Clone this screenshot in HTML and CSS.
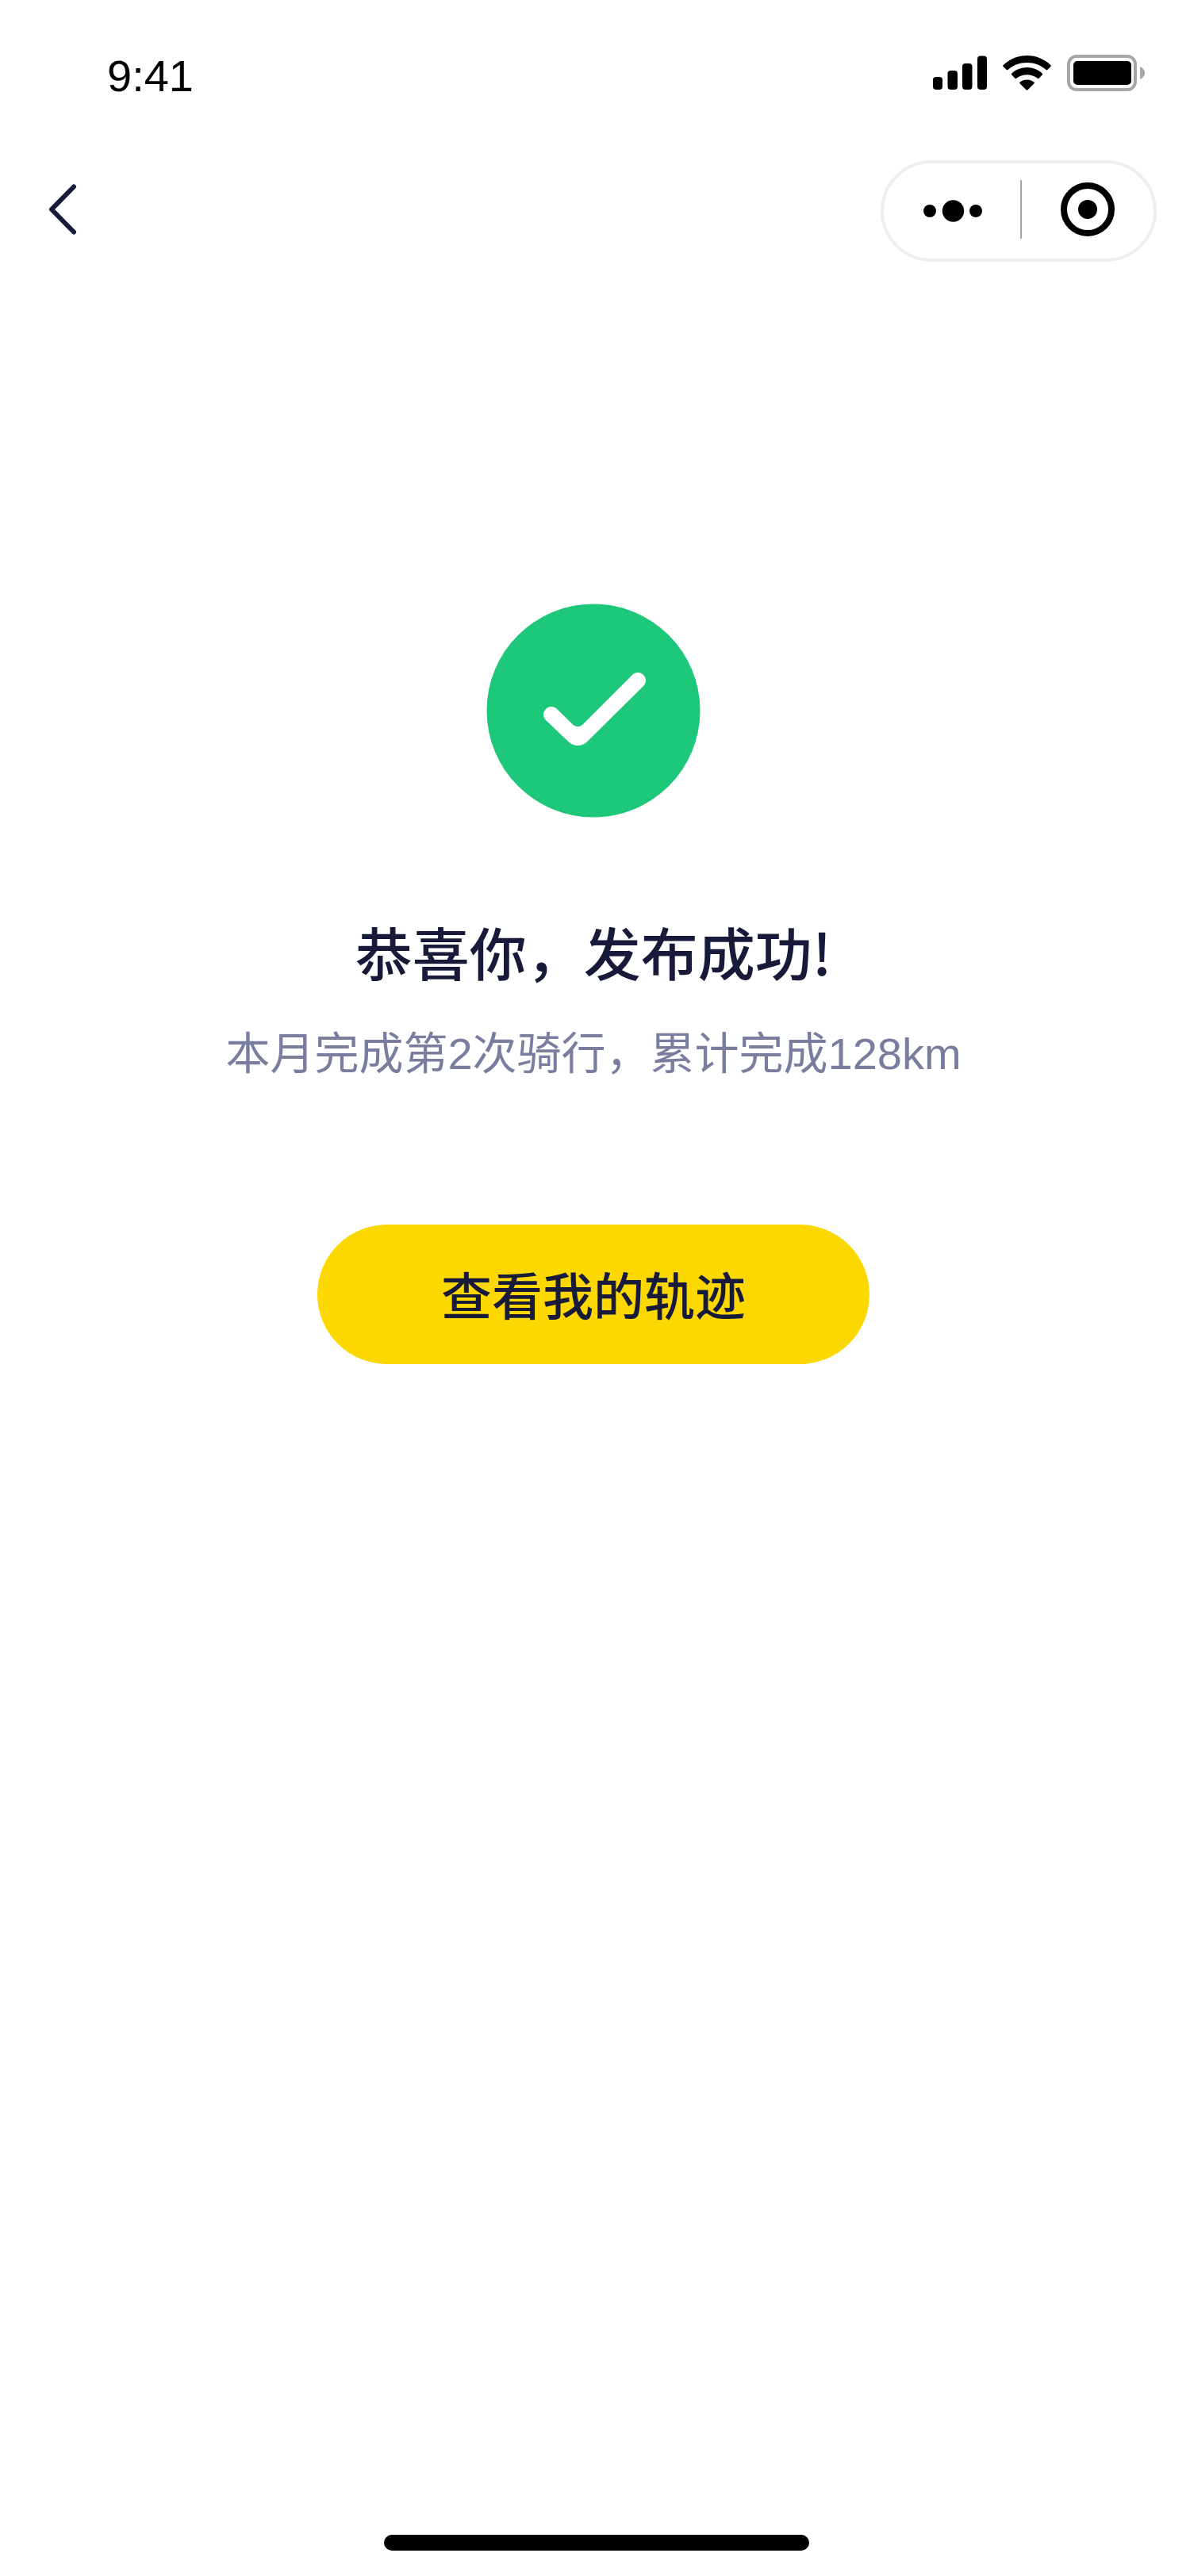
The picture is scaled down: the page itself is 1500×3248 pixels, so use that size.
FILE: index.html
```html
<!DOCTYPE html>
<html lang="zh-CN">
<head>
<meta charset="utf-8">
<meta name="viewport" content="width=device-width, initial-scale=1">
<title>发布成功</title>
<link rel="stylesheet" href="styles.css">
</head>
<body>
<div class="page">
  <header>
    <div class="status-bar">
      <time class="clock">9:41</time>
      <div class="status-icons">
        <svg width="68" height="44" viewBox="0 0 68 44" role="img" aria-label="信号">
          <rect x="0" y="27" width="12" height="16" rx="4"/>
          <rect x="18.500" y="19" width="12.500" height="24" rx="4"/>
          <rect x="37" y="10" width="12.500" height="33" rx="4"/>
          <rect x="56" y="0.500" width="12" height="42.500" rx="4"/>
        </svg>
        <svg width="61" height="44" viewBox="0 0 61 44" role="img" aria-label="无线网络">
          <path d="M30.500 0C42 0 52.500 4.500 60.300 12Q61.300 13 60.300 14L56.300 18Q55.500 18.800 54.600 18C48 12.200 39.500 9 30.500 9S13 12.200 6.400 18Q5.500 18.800 4.700 18L.7 14Q-.3 13 .7 12C8.500 4.500 19 0 30.500 0Z"/>
          <path d="M30.500 15C38 15 44.500 17.800 49.700 22.500Q50.700 23.500 49.700 24.500L45.500 28.800Q44.700 29.600 43.800 28.800C40 25.800 35.500 24.200 30.500 24.200S21 25.800 17.200 28.800Q16.300 29.600 15.500 28.800L11.300 24.500Q10.300 23.500 11.300 22.500C16.500 17.800 23 15 30.500 15Z"/>
          <path d="M30.500 30.500C34 30.500 37 31.600 39.300 33.500Q40.300 34.500 39.300 35.400L31.500 43.300Q30.500 44.200 29.500 43.300L21.700 35.400Q20.700 34.500 21.700 33.500C24 31.600 27 30.500 30.500 30.500Z"/>
        </svg>
        <svg width="98" height="46" viewBox="0 0 98 46" role="img" aria-label="电池">
          <rect x="2" y="2" width="84" height="42" rx="10" fill="none" stroke="#a6a6a6" stroke-width="4"/>
          <rect x="8" y="8" width="73" height="30" rx="5"/>
          <path d="M92 15C95.500 16.500 98 19.500 98 23S95.500 29.500 92 31Z" fill="#a6a6a6"/>
        </svg>
      </div>
    </div>
    <nav class="nav-bar">
      <button class="icon-button" type="button" aria-label="返回">
        <svg width="36" height="64" viewBox="0 0 36 64"><path d="M32 3.500L4 32L32 60.500" fill="none" stroke="#181a39" stroke-width="6" stroke-linecap="round" stroke-linejoin="round"/></svg>
      </button>
      <div class="capsule">
        <button class="icon-button capsule-action" type="button" aria-label="更多">
          <svg width="74" height="28" viewBox="0 0 74 28"><circle cx="8" cy="14" r="8"/><circle cx="37.500" cy="14" r="13.700"/><circle cx="66" cy="14" r="8"/></svg>
        </button>
        <span class="capsule-divider"></span>
        <button class="icon-button capsule-action" type="button" aria-label="关闭">
          <svg width="68" height="68" viewBox="0 0 68 68"><circle cx="34" cy="34" r="30" fill="none" stroke="#000" stroke-width="8"/><circle cx="34" cy="34" r="12"/></svg>
        </button>
      </div>
    </nav>
  </header>

  <main class="result">
    <svg class="result-icon" width="270" height="270" viewBox="0 0 270 270" role="img" aria-label="成功">
      <circle cx="135" cy="135" r="134.500" fill="#1ec87a"/>
      <path d="M74 146A10 10 0 0 1 88 132L109.300 152.700A8.500 8.500 0 0 0 121.300 152.700L185 89A10 10 0 0 1 199 103L127.300 174A17 17 0 0 1 103.300 174Z" fill="#fff"/>
    </svg>
    <h1 class="result-title">恭喜你，发布成功!</h1>
    <p class="result-text">本月完成第2次骑行，累计完成128km</p>
    <button class="primary-button" type="button">查看我的轨迹</button>
  </main>

  <footer class="home-area"><div class="home-indicator"></div></footer>
</div>
</body>
</html>
```
FILE: styles.css
```css
* {
  box-sizing: border-box;
}

body {
  margin: 0;
  background: #fff;
  color: #181a39;
  font-family: "Liberation Sans", "Noto Sans CJK SC", sans-serif;
}

button {
  margin: 0;
  padding: 0;
  border: 0;
  background: none;
  color: inherit;
  font: inherit;
  cursor: pointer;
}

svg {
  display: block;
}

.page {
  display: flex;
  flex-direction: column;
  min-height: 100vh;
}

.status-bar {
  display: flex;
  align-items: center;
  justify-content: space-between;
  height: 184px;
  padding: 0 57px 0 135px;
  color: #000;
}

.clock {
  padding-top: 8px;
  font-size: 56px;
  line-height: 64px;
}

.status-icons {
  display: flex;
  align-items: center;
  gap: 20px;
}

.nav-bar {
  display: flex;
  align-items: center;
  justify-content: space-between;
  padding: 18px 42px 0 61px;
}

.icon-button {
  display: flex;
  align-items: center;
  justify-content: center;
  padding-bottom: 4px;
}

.capsule {
  display: flex;
  align-items: center;
  width: 348px;
  height: 128px;
  border: 4px solid #eee;
  border-radius: 64px;
}

.capsule-action {
  flex: 1;
  height: 100%;
}

.capsule-action:first-child {
  padding: 0 0 0 4px;
}

.capsule-divider {
  width: 2px;
  height: 74px;
  margin: 0 0 4px 2px;
  background: #a6a6a6;
}

.result {
  display: flex;
  flex: 1;
  flex-direction: column;
  align-items: center;
  padding: 431px 4px 0 0;
}

.result-title {
  margin: 116px 0 0;
  font-family: "Noto Sans CJK SC", sans-serif;
  font-size: 72px;
  font-weight: 500;
  line-height: 104px;
}

.result-text {
  margin: 38px 0 0;
  color: #7a7e9e;
  font-size: 56px;
  line-height: 80px;
}

.primary-button {
  width: 696px;
  height: 176px;
  margin-top: 175px;
  padding-bottom: 4px;
  border-radius: 88px;
  background: #fcd800;
  font-family: "Noto Sans CJK SC", sans-serif;
  font-size: 64px;
  font-weight: 500;
  line-height: 96px;
}

.home-area {
  display: flex;
  justify-content: center;
  padding: 0 0 32px 4px;
}

.home-indicator {
  width: 536px;
  height: 20px;
  border-radius: 10px;
  background: #000;
}
```
